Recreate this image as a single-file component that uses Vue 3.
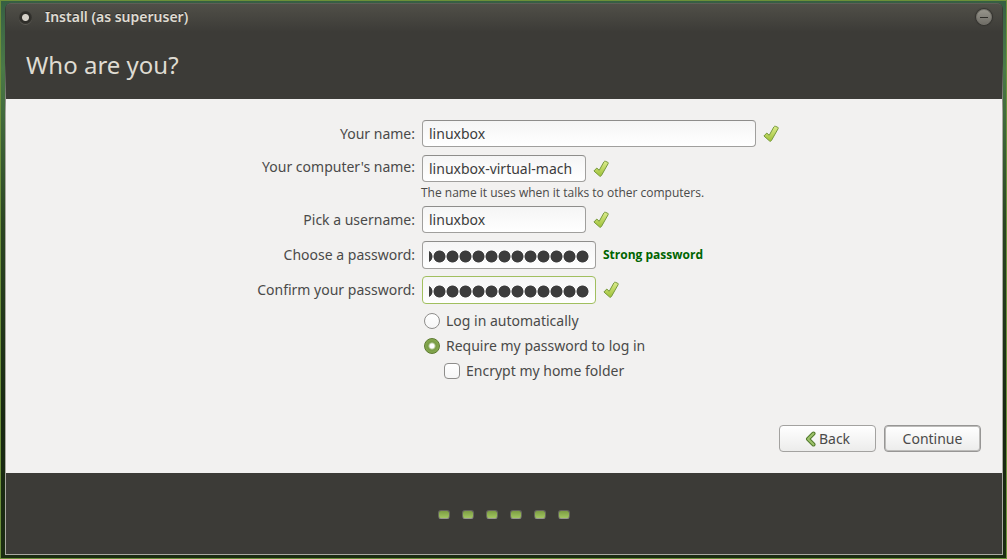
<script setup>
import { ref } from 'vue'

const fullName = ref('linuxbox')
const hostName = ref('linuxbox-virtual-mach')
const userName = ref('linuxbox')
const password = ref('linuxbox-secret')
const confirmation = ref('linuxbox-secret')
const login = ref('password')
const encrypt = ref(false)
const steps = 6
</script>

<template>
  <div class="desktop">
    <svg class="defs" width="0" height="0" aria-hidden="true">
      <defs>
        <linearGradient id="leaf" x1="0" y1="0" x2="0" y2="1">
          <stop offset="0" stop-color="#dcec8c" />
          <stop offset="1" stop-color="#9fc137" />
        </linearGradient>
        <symbol id="tick" viewBox="0 0 16 18">
          <path
            d="M.9 11 3.8 8 6.2 10.3 10.9 1.9Q11.4 1 12.4 1.3L14.8 2.3Q15.6 2.7 15.2 3.5L8.4 15.6Q7.6 16.8 6.6 16Z"
            fill="url(#leaf)" stroke="#76993c" stroke-width="1" stroke-linejoin="round" />
        </symbol>
      </defs>
    </svg>

    <div class="window">
      <header class="head">
        <div class="titlebar">
          <button class="close" type="button" aria-label="Close"></button>
          <span class="title">Install (as superuser)</span>
          <button class="minimize" type="button" aria-label="Minimize"></button>
        </div>
        <h1>Who are you?</h1>
      </header>

      <form class="content" @submit.prevent>
        <div class="fields">
          <label for="full-name">Your name:</label>
          <div class="field">
            <input id="full-name" v-model="fullName" class="entry wide" type="text" />
            <svg class="tick"><use href="#tick" /></svg>
          </div>

          <label for="host-name" class="host-label">Your computer's name:</label>
          <div class="field">
            <input id="host-name" v-model="hostName" class="entry short" type="text" />
            <svg class="tick"><use href="#tick" /></svg>
          </div>

          <p class="hint">The name it uses when it talks to other computers.</p>

          <label for="user-name">Pick a username:</label>
          <div class="field">
            <input id="user-name" v-model="userName" class="entry short" type="text" />
            <svg class="tick"><use href="#tick" /></svg>
          </div>

          <label for="password">Choose a password:</label>
          <div class="field">
            <input id="password" v-model="password" class="entry secret" type="password" />
            <strong class="strength">Strong password</strong>
          </div>

          <label for="confirmation">Confirm your password:</label>
          <div class="field">
            <input id="confirmation" v-model="confirmation" class="entry secret active" type="password" />
            <svg class="tick"><use href="#tick" /></svg>
          </div>

          <div class="options">
            <label class="option"><input v-model="login" type="radio" name="login" value="auto" />Log in automatically</label>
            <label class="option"><input v-model="login" type="radio" name="login" value="password" />Require my password to log in</label>
            <label class="option nested"><input v-model="encrypt" type="checkbox" />Encrypt my home folder</label>
          </div>
        </div>

        <div class="actions">
          <button class="btn" type="button">
            <svg class="arrow" viewBox="0 0 11 16">
              <path d="M8.5 2.5 3 8l5.5 5.5" fill="none" stroke="#527a2c" stroke-width="4" stroke-linecap="round" stroke-linejoin="round" />
              <path d="M8.5 2.5 3 8l5.5 5.5" fill="none" stroke="#9dc26b" stroke-width="2" stroke-linecap="round" stroke-linejoin="round" />
            </svg>
            Back
          </button>
          <button class="btn default" type="submit">Continue</button>
        </div>
      </form>

      <footer class="progress">
        <span v-for="n in steps" :key="n" class="step"></span>
      </footer>
    </div>
  </div>
</template>

<style>
body {
  margin: 0;
}
</style>

<style scoped>
* {
  box-sizing: border-box;
}
.desktop {
  display: flex;
  min-height: 100vh;
  padding: 2px 3px 3px 4px;
  border: 1px solid #6c8f39;
  background: linear-gradient(to bottom, #365f43 0, #4b7a48 12%, #2b4522 40%, #182812 75%, #1b2c12 100%);
  color: #4a4a49;
  font-family: "Noto Sans", "Open Sans", sans-serif;
  font-size: 14px;
  line-height: 20px;
}
.defs {
  position: absolute;
}
.window {
  display: flex;
  flex: 1;
  flex-direction: column;
  padding: 0 1px 1px;
  border-radius: 6px 6px 0 0;
  background: linear-gradient(to bottom, #3c3b37 60px, #aaa8a2 110px);
}
.head {
  height: 96px;
  border-top: 1px solid #5f5e57;
  border-radius: 5px 5px 0 0;
  background: linear-gradient(to bottom, #504f48 0, #3c3b37 28px);
  color: #dfdbd2;
}
.titlebar {
  display: flex;
  align-items: center;
  height: 26px;
  padding: 0 10px 0 13px;
}
.title {
  flex: 1;
  margin-left: 13px;
  font-weight: 600;
  text-shadow: 0 -1px 0 #2c2b28;
}
.close {
  width: 13px;
  height: 13px;
  padding: 0;
  border: 0;
  border-radius: 50%;
  background: radial-gradient(circle, #d5d1c8 0 3px, #2f2e2a 4px 5px, #35342f 6px);
  box-shadow: 0 1px 0 #5c5a54;
}
.minimize {
  display: flex;
  align-items: center;
  justify-content: center;
  width: 16px;
  height: 16px;
  padding: 0;
  border: 1px solid #74726b;
  border-radius: 50%;
  background: linear-gradient(to bottom, #96948b, #706e67);
  box-shadow: 0 0 1px 1px #33322e;
}
.minimize::before {
  width: 8px;
  height: 1px;
  background: #2f2e2a;
  content: "";
}
h1 {
  margin: 0;
  padding: 18px 20px 0;
  font-size: 24px;
  font-weight: 400;
  line-height: 34px;
}
.content {
  display: flex;
  flex: 1;
  flex-direction: column;
  padding: 21px 21px;
  background: #f2f1f0;
}
.fields {
  display: grid;
  grid-template-columns: 164px 357px;
  column-gap: 7px;
  row-gap: 8px;
  justify-content: center;
  align-items: center;
  padding-left: 22px;
}
.fields > label {
  text-align: right;
  white-space: nowrap;
  justify-self: end;
}
.fields > .host-label {
  align-self: start;
  padding-top: 2px;
}
.field {
  display: flex;
  align-items: center;
  gap: 7px;
  height: 27px;
}
.entry {
  height: 27px;
  padding: 0 6px;
  border: 1px solid #a09f9d;
  border-top-color: #8e8d8b;
  border-radius: 4px;
  outline: 0;
  background: linear-gradient(to bottom, #f5f5f5, #ffffff);
  color: #3c3c3c;
  font: inherit;
}
.wide {
  width: 334px;
}
.short {
  width: 164px;
}
.secret {
  align-self: flex-start;
  width: 174px;
  height: 28px;
  background:
    radial-gradient(circle closest-side, #3c3c3c 86%, transparent 98%) right 8px / 13px 13px repeat-x content-box,
    linear-gradient(to bottom, #f5f5f5, #ffffff) border-box;
  color: transparent;
}
.secret.active {
  border-color: #a1bf5f;
}
.tick {
  flex: none;
  width: 16px;
  height: 18px;
}
.hint {
  grid-column: 2;
  margin: -7px 0 -4px -1px;
  font-family: "Open Sans", "Noto Sans", sans-serif;
  font-size: 12px;
  line-height: 19px;
}
.strength {
  color: #006400;
  font-family: "Open Sans", "Noto Sans", sans-serif;
  font-size: 12px;
  white-space: nowrap;
}
.options {
  display: flex;
  grid-column: 2;
  flex-direction: column;
  gap: 5px;
  padding: 0 2px;
}
.option {
  display: flex;
  align-items: center;
  gap: 6px;
}
.nested {
  margin-left: 20px;
}
.option input {
  width: 16px;
  height: 16px;
  margin: 0;
  border: 1px solid #8e8d8b;
  background: linear-gradient(to bottom, #ffffff, #f6f6f6);
  appearance: none;
}
.option input[type="radio"] {
  border-radius: 50%;
}
.option input[type="checkbox"] {
  border-radius: 4px;
}
.option input[type="radio"]:checked {
  border-color: #5c7a2f;
  background: radial-gradient(circle, #ffffff 0 2px, #789b45 4px, #86a94f 7px);
}
.actions {
  display: flex;
  justify-content: flex-end;
  gap: 8px;
  margin-top: auto;
}
.btn {
  display: flex;
  align-items: center;
  justify-content: center;
  gap: 3px;
  width: 97px;
  height: 27px;
  padding: 0;
  border: 1px solid #a3a2a0;
  border-radius: 4px;
  background: linear-gradient(to bottom, #ffffff, #ececeb);
  color: #4a4a49;
  font: inherit;
}
.btn.default {
  border-color: #979695;
  box-shadow: inset 0 0 0 1px #bdbcba;
}
.arrow {
  width: 11px;
  height: 16px;
}
.progress {
  display: flex;
  align-items: center;
  justify-content: center;
  gap: 12px;
  height: 81px;
  padding-top: 2px;
  background: #3c3b37;
}
.step {
  width: 12px;
  height: 9px;
  border: 1px solid #66655f;
  border-bottom-color: #96958f;
  border-radius: 3px;
  background: linear-gradient(to bottom, #7c9d43, #a2c661);
}
</style>
